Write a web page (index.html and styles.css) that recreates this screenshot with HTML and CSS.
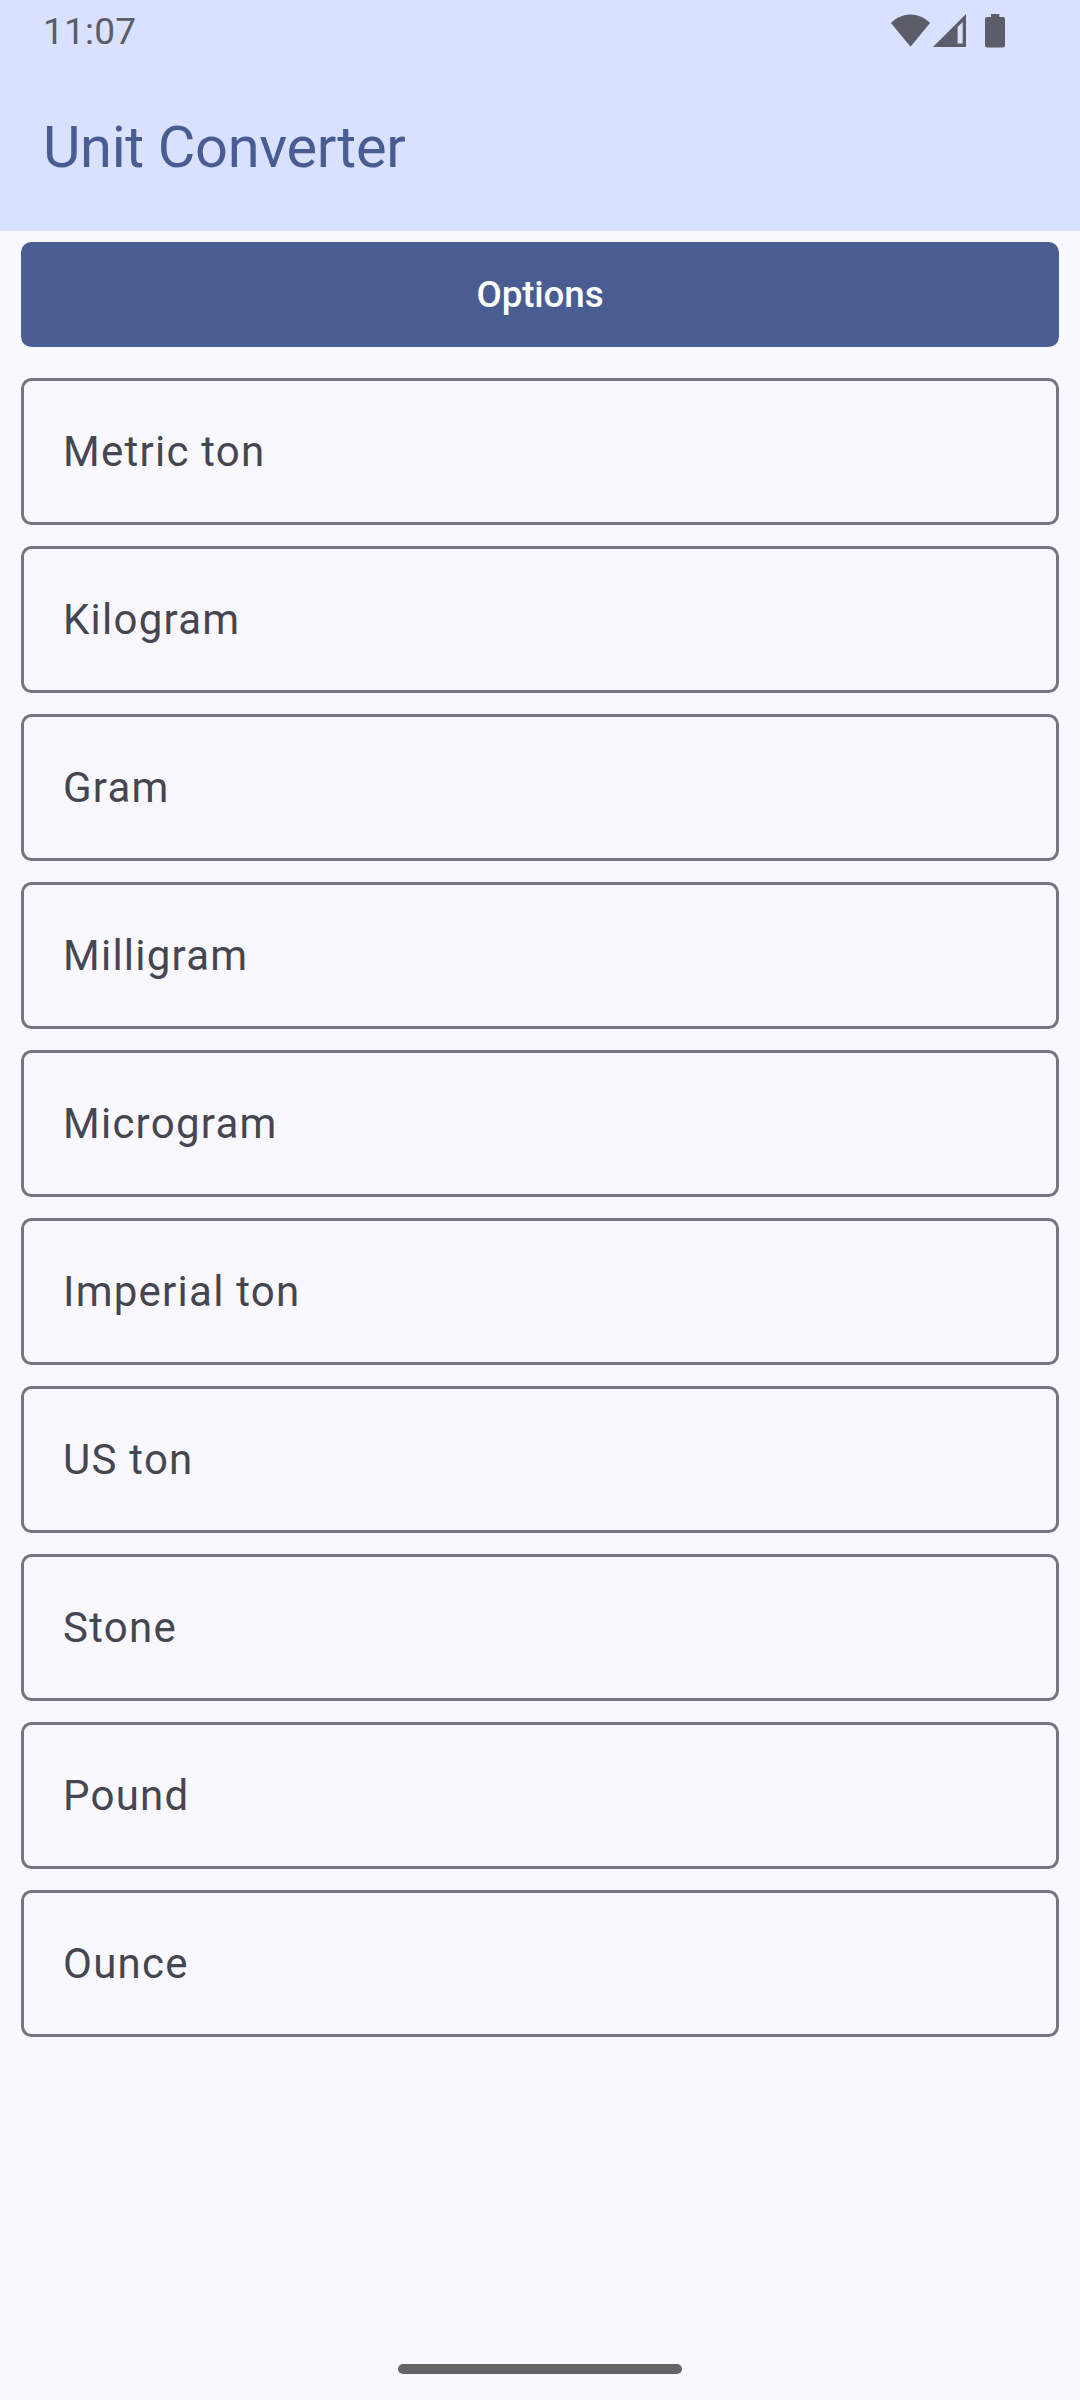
FILE: index.html
```html
<!DOCTYPE html>
<html lang="en">
<head>
<meta charset="utf-8">
<title>Unit Converter</title>
<link rel="stylesheet" href="styles.css">
</head>
<body>
<header class="top">
  <div class="status">
    <span class="time">11:07</span>
    <svg class="status-icons" width="120" height="62" viewBox="0 0 120 62">
      <path d="M1 23 C12 11.500 29 11.500 40 23 L20.500 46.700Z"/>
      <path fill-rule="evenodd" d="M43 47 L76 14 V47Z M67.600 27 V43.500 H72.700 V22Z"/>
      <path d="M101 17 V14 H109.300 V17 H113 Q115 17 115 19 V45.500 Q115 47.500 113 47.500 H97 Q95 47.500 95 45.500 V19 Q95 17 97 17Z"/>
    </svg>
  </div>
  <h1 class="title">Unit Converter</h1>
</header>
<main class="content">
  <button class="options">Options</button>
  <div class="fields">
    <div class="field">Metric ton</div>
    <div class="field">Kilogram</div>
    <div class="field">Gram</div>
    <div class="field">Milligram</div>
    <div class="field">Microgram</div>
    <div class="field">Imperial ton</div>
    <div class="field">US ton</div>
    <div class="field">Stone</div>
    <div class="field">Pound</div>
    <div class="field">Ounce</div>
  </div>
</main>
<footer class="nav"><div class="handle"></div></footer>
</body>
</html>
```
FILE: styles.css
```css
* { box-sizing: border-box; }
body {
  margin: 0;
  height: 2400px;
  display: flex;
  flex-direction: column;
  background: #faf8ff;
  font-family: Roboto, sans-serif;
}
.top { height: 231px; background: #dae1ff; }
.status {
  height: 62px;
  padding: 0 70px 0 43px;
  display: flex;
  justify-content: space-between;
  align-items: flex-start;
  color: #5b5d69;
}
.time { font-size: 37px; line-height: 64px; letter-spacing: 0.2px; }
.status-icons { fill: #5b5d69; }
.title {
  margin: 0;
  padding-left: 43px;
  height: 169px;
  line-height: 170px;
  font-size: 57.75px;
  font-weight: 400;
  letter-spacing: -0.35px;
  color: #495d92;
}
.content { flex: 1; padding: 11px 21px 0; }
.options {
  display: block;
  width: 100%;
  height: 105px;
  border: 0;
  border-radius: 10.5px;
  background: #495d92;
  color: #fff;
  font: 500 36.75px Roboto, sans-serif;
  letter-spacing: -0.1px;
}
.fields {
  margin-top: 31px;
  display: flex;
  flex-direction: column;
  gap: 21px;
}
.field {
  height: 147px;
  border: 3px solid #757680;
  border-radius: 10.5px;
  padding-left: 39px;
  line-height: 141px;
  font-size: 42px;
  letter-spacing: 1.25px;
  color: #45464f;
}
.nav { height: 63px; padding-top: 27px; display: flex; justify-content: center; }
.handle { width: 284px; height: 10px; border-radius: 5px; background: #646466; }
```
